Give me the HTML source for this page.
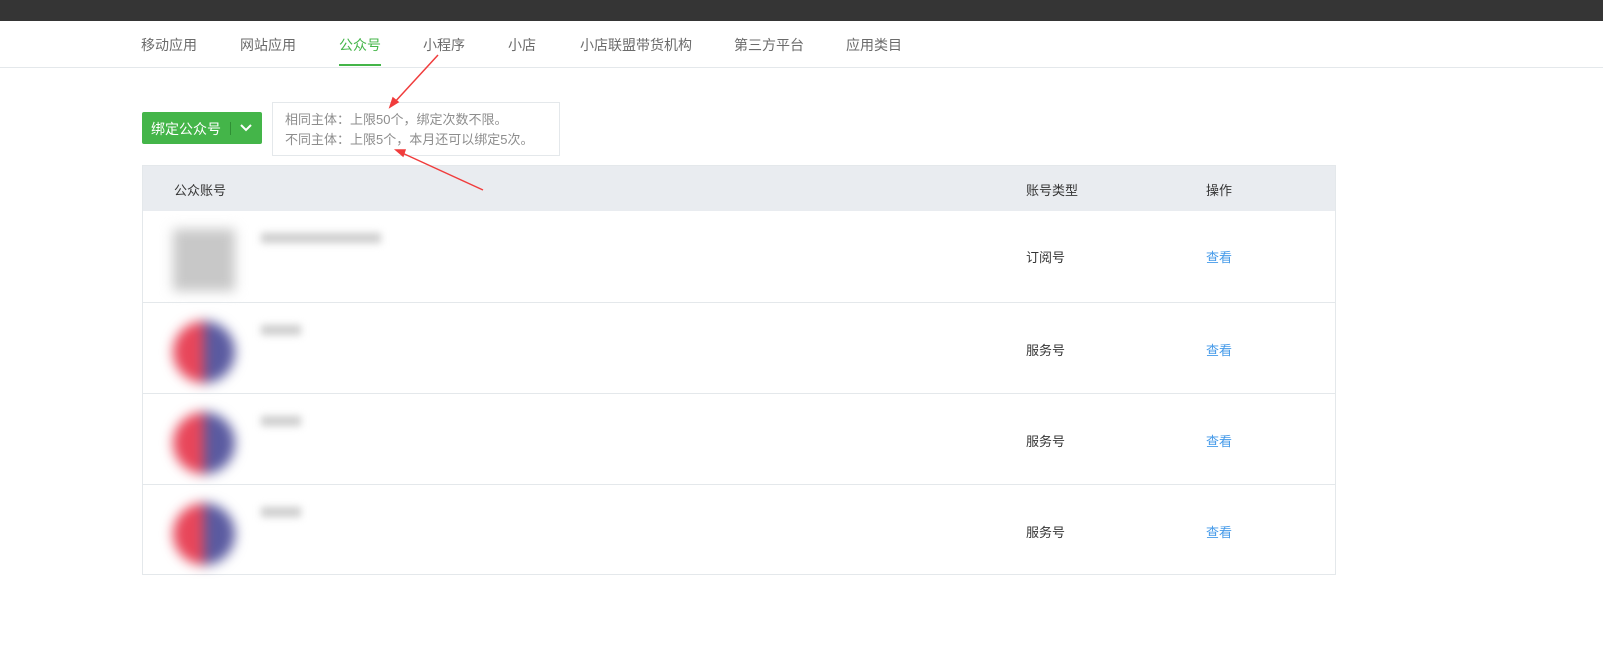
<!DOCTYPE html><html><head><meta charset="utf-8"><style>
*{margin:0;padding:0;box-sizing:border-box}
body{width:1603px;height:670px;background:#fff;font-family:"Liberation Sans","Noto Sans CJK SC",sans-serif;font-size:14px;color:#353535;position:relative;overflow:hidden}
.top{position:absolute;left:0;top:0;width:100%;height:21px;background:#353535}
.nav{position:absolute;top:21px;left:0;width:100%;height:47px;border-bottom:1px solid #e4e8eb}
.nav span{position:absolute;top:14px;color:#6b6b6b;font-size:14px}
.nav .on{color:#44b549}
.nav .line{position:absolute;left:339px;top:43px;width:42px;height:2px;background:#44b549}
.btn{position:absolute;left:142px;top:112px;width:120px;height:32px;background:#44b549;border-radius:2px;color:#fff;font-size:14px}
.btn .t{position:absolute;left:9px;top:7px}
.btn .sep{position:absolute;left:88px;top:10px;width:1px;height:13px;background:#2f8f34}
.tip{position:absolute;left:272px;top:102px;width:288px;height:54px;border:1px solid #e4e8eb;background:#fff;color:#8d8d8d;font-size:13px;line-height:20px;padding:7px 0 0 12px}
.tbl{position:absolute;left:142px;top:165px;width:1194px;height:410px;border:1px solid #e4e8eb}
.th{height:45px;background:#e9ecf0;position:relative}
.th span,.row span{position:absolute;font-size:13px}
.row{height:91px;border-top:1px solid #e4e8eb;position:relative}
.row:first-of-type{border-top:none}
.lk{color:#459ae9}
.av{position:absolute;left:30px;top:18px;width:62px;height:62px;filter:blur(6px)}
.nm{position:absolute;left:118px;top:22px;height:10px;background:#ccc;filter:blur(4px)}
</style></head><body>
<div class="top"></div>
<div class="nav">
<span style="left:141px">移动应用</span><span style="left:240px">网站应用</span><span class="on" style="left:339px">公众号</span><span style="left:423px">小程序</span><span style="left:508px">小店</span><span style="left:580px">小店联盟带货机构</span><span style="left:734px">第三方平台</span><span style="left:846px">应用类目</span>
<div class="line"></div></div>
<div class="btn"><span class="t">绑定公众号</span><div class="sep"></div>
<svg style="position:absolute;left:98px;top:11px" width="12" height="10"><path d="M1 2l5 5 5-5" stroke="#fff" stroke-width="2" fill="none"/></svg></div>
<div class="tip">相同主体：上限50个，绑定次数不限。<br>不同主体：上限5个，本月还可以绑定5次。</div>
<div class="tbl">
<div class="th"><span style="left:31px;top:14px">公众账号</span><span style="left:883px;top:14px">账号类型</span><span style="left:1063px;top:14px">操作</span></div>
<div class="row" style="border-top:none"><div class="av" style="background:#c8c8c8"></div><div class="nm" style="width:120px"></div><span style="left:883px;top:36px">订阅号</span><span class="lk" style="left:1063px;top:36px">查看</span></div>
<div class="row"><div class="av" style="border-radius:50%;background:linear-gradient(90deg,#e8465a 50%,#5a5aa0 50%)"></div><div class="nm" style="width:40px"></div><span style="left:883px;top:37px">服务号</span><span class="lk" style="left:1063px;top:37px">查看</span></div>
<div class="row"><div class="av" style="border-radius:50%;background:linear-gradient(90deg,#e8465a 50%,#5a5aa0 50%)"></div><div class="nm" style="width:40px"></div><span style="left:883px;top:37px">服务号</span><span class="lk" style="left:1063px;top:37px">查看</span></div>
<div class="row"><div class="av" style="border-radius:50%;background:linear-gradient(90deg,#e8465a 50%,#5a5aa0 50%)"></div><div class="nm" style="width:40px"></div><span style="left:883px;top:37px">服务号</span><span class="lk" style="left:1063px;top:37px">查看</span></div>
</div>
<svg style="position:absolute;left:0;top:0" width="1603" height="670"><g stroke="#f03c3c" stroke-width="1.5" fill="#f03c3c"><line x1="438" y1="55" x2="393" y2="104"/><path d="M390 107l3-9 5 4z"/><line x1="483" y1="190" x2="400" y2="152"/><path d="M396 150l9 0-2 6z"/></g></svg>
</body></html>
